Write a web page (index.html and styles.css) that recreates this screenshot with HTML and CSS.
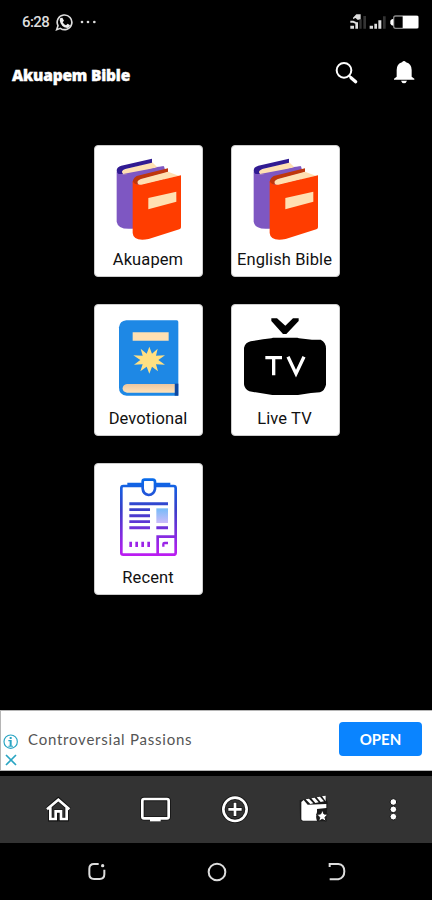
FILE: index.html
```html
<!DOCTYPE html>
<html lang="en">
<head>
<meta charset="utf-8">
<title>Akuapem Bible</title>
<link rel="stylesheet" href="styles.css">
</head>
<body>
<svg class="defs" width="0" height="0" aria-hidden="true">
  <defs>
    <linearGradient id="ink" gradientUnits="userSpaceOnUse" x1="0" y1="75" x2="0" y2="305"><stop offset="0" stop-color="#086bea"/><stop offset=".4" stop-color="#3a3fc9"/><stop offset="1" stop-color="#bd1cf2"/></linearGradient>
    <linearGradient id="photo" x1="0" y1="0" x2="0" y2="1"><stop offset="0" stop-color="#75bbf8"/><stop offset="1" stop-color="#cbbcfa"/></linearGradient>
    <linearGradient id="pages" x1="0" y1="0" x2="0" y2="1"><stop offset="0" stop-color="#ebc6a0"/><stop offset="1" stop-color="#ffe2b8"/></linearGradient>
    <symbol id="books" viewBox="30 27 327 300">
      <path fill="#7e57c2" d="M98 106L239 91V260L145 278Q102 282 98 257Z"/>
      <path fill="#ffe0b2" d="M112 103L204 78L220 94L143 116L116 115Z"/>
      <path fill="#311b92" d="M204 68V80L124 99Q108 105 117 114L104 114Q99 112 98 103Q99 92 112 89Z"/>
      <path fill="#7e57c2" d="M117 114L240 91L243 101L158 123Z"/>
      <path fill="#bf360c" d="M252 97V109L171 130Q158 136 163 145L148 148Q142 129 158 120Z"/>
      <path fill="#ffe0b2" d="M161 136Q164 132 171 129L252 107L284 119L174 148Q158 148 161 136Z"/>
      <path fill="#ff3d00" d="M146 134Q150 148 172 146L291 118V274Q291 278 286 280L194 309Q148 317 146 291Z"/>
      <path fill="#ffe0b2" d="M193 186L277 167V197L193 220Z"/>
    </symbol>
  </defs>
</svg>
<div class="phone">
  <div class="status">
    <span class="clock">6:28</span>
    <svg class="whatsapp" viewBox="165 38 54 54"><path fill="none" stroke="#ddd" stroke-width="5" d="M170 88L174 76A22 22 0 1 1 181 84Z"/><path fill="#eee" d="M181 53l6-1 5 9-4 5q4 7 10 9l5-5 7 5q0 7-8 8-20-3-23-24z"/></svg>
    <svg class="more" viewBox="240 60 51 12"><g fill="#ddd"><circle cx="246" cy="66" r="4"/><circle cx="264" cy="66" r="4"/><circle cx="283" cy="66" r="4"/></g></svg>
    <svg class="signals" viewBox="402 38 210 51">
      <path fill="#ddd" d="M403 76h11v9h-11zM418 66h8v19h-8zM461 76h10v9h-10zM475 70h8v15h-8zM487 60h9v25h-9zM411 52l10-10h13v16h-10l-5-5-8 3zM403 61h9l10 5-2 5-9-4h-8z"/>
      <path fill="#333" d="M430 57h7v28h-7zM442 47h8v38h-8zM501 48h8v37h-8z"/>
      <rect x="533" y="47" width="74" height="37" rx="6" fill="none" stroke="#888" stroke-width="4"/>
      <path fill="#fff" d="M560 47h46v36h-46zM523 61q5-7 9-4v19q-6 0-9-6z"/>
    </svg>
  </div>
  <header class="appbar">
    <h1 class="title">Akuapem Bible</h1>
    <svg class="search" viewBox="357 182 72 72"><circle cx="384" cy="210" r="22" fill="none" stroke="#fff" stroke-width="6"/><path stroke="#fff" stroke-width="10" stroke-linecap="round" d="M405 232L419 244"/><path stroke="#fff" stroke-width="6" d="M398 224L405 231"/></svg>
    <svg class="bell" viewBox="531 180 66 72"><path fill="#fff" d="M558 187q6-8 12 0 17 5 17 23v20l8 6v3h-61v-3l8-6v-20q0-18 16-23zM555 242h18q-3 8-9 8t-9-8z"/></svg>
  </header>
  <main class="grid">
    <a class="card"><svg class="art"><use href="#books"/></svg><span class="label">Akuapem</span></a>
    <a class="card"><svg class="art"><use href="#books"/></svg><span class="label">English Bible</span></a>
    <a class="card">
      <svg class="art" viewBox="30 24 327 300">
        <path fill="#1e88e5" d="M127 73H278Q283 73 283 78V299H128Q105 297 105 275V94Q107 75 127 73Z"/>
        <path fill="#0d47a1" d="M272 263h11v36h-11z"/>
        <path fill="url(#pages)" d="M129 264H272V290H129Q116 288 116 277T129 264Z"/>
        <path fill="#ffe0b2" d="M146 109h108v25H146z"/>
        <path fill="#ffe082" d="M196 152L204 173 221 158 216 179 243 178 223 192 243 206 216 205 222 226 204 212 196 233 188 212 169 226 176 205 150 206 169 192 148 178 176 179 170 158 188 173Z"/>
      </svg><span class="label">Devotional</span>
    </a>
    <a class="card">
      <svg class="art" viewBox="27 24 327 300">
        <path d="M148 67h17l25 22 23-22h17v8l-37 39h-10l-35-39z"/>
        <path d="M86 136L123 130 148 127 153 125H226L231 127 270 131H296Q312 138 312 158V266Q308 284 294 289L267 291 228 297H151L119 292 82 286Q67 279 66 265V156Q69 140 86 136Z"/>
        <path fill="none" stroke="#fff" stroke-width="10" d="M130 185h50M155 185v53M198 182l24 51 24-51"/>
      </svg><span class="label">Live TV</span>
    </a>
    <a class="card">
      <svg class="art" viewBox="30 27 327 300">
        <g fill="none" stroke="url(#ink)" stroke-width="8">
          <path d="M174 96H118Q112 96 112 102V297Q112 302 118 302H268Q275 302 275 296V102Q275 96 269 96H215M130 90H174M215 90H259"/>
          <path d="M176 83Q176 77 182 77H206Q213 77 213 84V105Q210 122 194 123Q177 120 176 103Z"/>
          <path d="M221 302V248H275"/><path stroke-width="7" d="M238 278V270Q238 267 242 267H252"/>
        </g>
        <g fill="url(#ink)"><path d="M136 145h116v9H136zM136 163h62v8h-62zM136 181h62v9h-62zM136 199h62v8h-62zM136 217h62v9h-62zM217 217h35v9h-35zM136 263h8v16h-8zM154 263h8v16h-8zM172 263h8v16h-8zM190 263h8v16h-8z"/></g>
        <path fill="url(#photo)" d="M217 163h35v44h-35z"/>
      </svg><span class="label">Recent</span>
    </a>
  </main>
  <aside class="ad">
    <div class="adchoices">
      <svg class="info" viewBox="10 101 45 45"><circle cx="33" cy="124" r="20" fill="none" stroke="#29a5c3" stroke-width="3.5"/><path fill="#29a5c3" d="M30 110h6v6h-6zM26 119h10v17h4v3H26v-3h4v-13h-4z"/></svg>
      <svg class="close" viewBox="15 161 36 36"><path stroke="#29a5c3" stroke-width="5" d="M18 164L48 194M48 164L18 194"/></svg>
    </div>
    <span class="adtext">Controversial Passions</span>
    <button class="open">OPEN</button>
  </aside>
  <nav class="tabs">
    <svg class="home" viewBox="135 288 78 78"><path fill="none" stroke="#111" stroke-width="13" d="M141 328L175 298 208 328M151 322V358H168V335H182V358H200V322"/><path fill="none" stroke="#fff" stroke-width="8" d="M141 328L175 299 208 328M151 320V357H167V334H183V357H200V320"/></svg>
    <svg class="screen" viewBox="420 288 93 78"><rect x="427" y="297" width="79" height="58" rx="5" fill="none" stroke="#151515" stroke-width="13"/><rect x="427" y="297" width="79" height="58" rx="5" fill="none" stroke="#fff" stroke-width="8"/><path fill="#fff" d="M450 356h32v8h-32z"/></svg>
    <svg class="add" viewBox="14 285 84 84"><circle cx="56" cy="328" r="35" fill="none" stroke="#151515" stroke-width="13"/><path stroke="#151515" stroke-width="13" d="M34 328h44M56 306v44"/><circle cx="56" cy="328" r="35" fill="none" stroke="#fff" stroke-width="8"/><path stroke="#fff" stroke-width="8" d="M36 328h40M56 308v40"/></svg>
    <svg class="movie" viewBox="249 285 90 90"><path fill="#1a1a1a" d="M251 304L328 290 335 310 331 367H259Q252 365 252 358Z"/><path fill="#fff" d="M256 309l7-6 12 14 56-2v12l-28 3v9q-5 15 0 26h-38q-9 0-9-6zM269 301l10-2 13 14-9 2zM286 298l10-2 12 14-10 2zM302 295l10-2 12 14-10 2zM318 292l11-2v17z"/><path fill="#fff" stroke="#1a1a1a" stroke-width="3" d="M319 333l5 12 12 1-9 9 3 12-11-6-11 6 3-12-9-9 12-1z"/></svg>
    <svg class="dots" viewBox="519 291 27 72"><g fill="#fff" stroke="#151515" stroke-width="3"><circle cx="532" cy="306" r="10"/><circle cx="532" cy="328" r="10"/><circle cx="532" cy="350" r="10"/></g></svg>
  </nav>
  <footer class="system">
    <svg class="recents" viewBox="261 486 60 57"><path fill="none" stroke="#ddd" stroke-width="6" d="M296 492H282Q268 492 268 506V523Q268 537 282 537H299Q313 537 313 523V509"/><circle cx="308" cy="497" r="5" fill="#ddd"/></svg>
    <svg class="circle" viewBox="0 0 60 60"><circle cx="30" cy="30" r="25" fill="none" stroke="#ddd" stroke-width="6"/></svg>
    <svg class="back" viewBox="336 486 54 57"><path fill="none" stroke="#ddd" stroke-width="6" d="M341 501V492H367Q385 494 385 514T367 538H341"/></svg>
  </footer>
</div>
</body>
</html>
```
FILE: styles.css
```css
* { box-sizing: border-box; }
body { margin: 0; background: #000; color: #fff; font-family: Roboto, sans-serif; }
svg { display: block; flex: none; }
.defs { position: absolute; }
.phone { width: 432px; height: 900px; display: flex; flex-direction: column; overflow: hidden; background: #000; }

.status { height: 44px; display: flex; align-items: center; padding: 0 12px 0 22px; }
.clock { width: 33px; font-size: 15px; font-weight: 500; letter-spacing: -.6px; color: #ddd; }
.whatsapp { width: 18px; height: 18px; }
.more { width: 17px; height: 4px; margin-left: 7px; }
.signals { width: 70px; height: 17px; margin-left: auto; margin-bottom: 2px; }

.appbar { height: 60px; display: flex; align-items: center; padding: 0 17px 0 12px; }
.title { margin: 2px auto 0 0; font: 800 15.5px/20px "Open Sans", sans-serif; letter-spacing: -.2px; white-space: nowrap; -webkit-text-stroke: .4px #fff; }
.search { width: 24px; height: 24px; margin-right: 34px; margin-bottom: 2px; }
.bell { width: 22px; height: 24px; margin-bottom: 4px; }

.grid { flex: 1; display: grid; grid-template-columns: 109px 109px; grid-auto-rows: 132px; gap: 27px 27.5px; padding: 41px 0 0 94px; align-content: start; }
.card { display: flex; flex-direction: column; align-items: center; background: #fff; border: 1px solid #ccc; border-radius: 4px; }
.art { width: 109px; height: 100px; margin: -1px -1px 0; }
.label { margin: 5px 1px 0 0; font-size: 16.5px; line-height: 20px; letter-spacing: .1px; color: #111; white-space: nowrap; }

.ad { height: 61px; display: flex; align-items: center; background: #fff; border: 1px solid #b5b5b5; border-width: 1px 0 1px 1px; padding: 0 10px 0 2px; }
.adchoices { width: 25px; align-self: flex-end; padding-bottom: 4px; }
.info { width: 15px; height: 15px; }
.close { width: 12px; height: 12px; margin: 5px 0 0 2px; }
.adtext { font: 15px/20px Lato, sans-serif; color: #555; letter-spacing: .77px; white-space: nowrap; margin-bottom: 4px; }
.open { margin: 0 0 3px auto; width: 83px; height: 34px; padding: 0; border: 0; border-radius: 4px; background: #0a84ff; color: #fff; font: 700 15px/32px Lato, sans-serif; }

.tabs { height: 67px; margin-top: 5px; background: #333; display: flex; align-items: center; padding: 0 0 2px 45px; }
.home { width: 26px; height: 26px; }
.screen { width: 31px; height: 26px; margin-left: 69px; }
.add { width: 28px; height: 28px; margin-left: 49.5px; }
.movie { width: 30px; height: 30px; margin-left: 50.5px; }
.dots { width: 9px; height: 24px; margin-left: 60px; }

.system { height: 57px; display: flex; align-items: center; padding-left: 87px; }
.recents { width: 20px; height: 19px; }
.circle { width: 20px; height: 20px; margin-left: 99.5px; }
.back { width: 18px; height: 19px; margin-left: 101.5px; }
```
